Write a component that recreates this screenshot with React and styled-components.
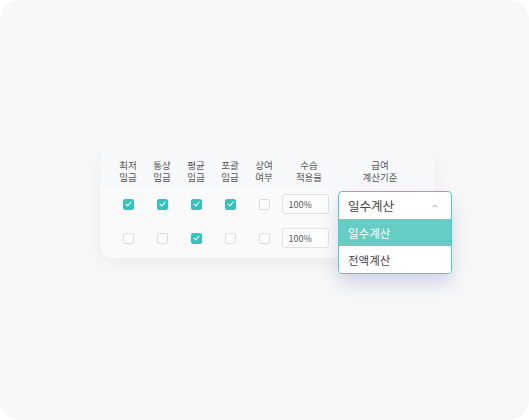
import React from 'react';
import styled, { createGlobalStyle } from 'styled-components';

const GlobalStyle = createGlobalStyle`
    html, body {
        margin: 0;
        padding: 0;
        background: #ffffff;
    }
    body {
        font-family: "Noto Sans CJK KR", "Noto Sans", sans-serif;
    }
`;

const Frame = styled.div`
    width: 529px;
    height: 420px;
    background: #f8f8f8;
    border-radius: 20px;
    box-sizing: border-box;
    padding: 146px 0 0 100px;
`;

const Card = styled.div`
    position: relative;
    width: 335px;
    height: 112px;
    background: #fafafa;
    border-radius: 14px;
    box-shadow: 0 6px 20px rgba(0, 0, 0, 0.05);
`;

const HeaderRow = styled.div`
    display: grid;
    grid-template-columns: 34px 34px 34px 34px 34px 56px 86px;
    padding-left: 11px;
    height: 41px;
    align-items: end;
    background: #f7f8fa;
    border-radius: 14px 14px 0 0;
`;

const HeadCell = styled.div`
    text-align: center;
    font-size: 9.5px;
    line-height: 12px;
    color: #555;
    padding-bottom: 4px;
`;

const Row = styled.div`
    display: grid;
    grid-template-columns: 34px 34px 34px 34px 34px 56px 86px;
    padding-left: 11px;
    height: 34px;
    align-items: center;
`;

const Cell = styled.div`
    display: flex;
    justify-content: center;
    align-items: center;
    position: relative;
    height: 100%;
`;

const Box = styled.div`
    width: 11px;
    height: 11px;
    box-sizing: border-box;
    border-radius: 2px;
    display: flex;
    align-items: center;
    justify-content: center;
    background: ${p => (p.checked ? '#2ec6bf' : '#fcfcfc')};
    border: 1px solid ${p => (p.checked ? '#2ec6bf' : '#dddddd')};
`;

const RateInput = styled.div`
    width: 47px;
    height: 20px;
    box-sizing: border-box;
    border: 1px solid #e1e1e1;
    border-radius: 3px;
    background: #fdfdfd;
    font-size: 9px;
    color: #555;
    display: flex;
    align-items: center;
    padding-left: 6px;
    margin-right: 8px;
`;

const Dropdown = styled.div`
    position: absolute;
    top: 4px;
    left: 1px;
    width: 114px;
    box-sizing: border-box;
    border: 1px solid #40d0c8;
    border-radius: 4px;
    background: #ffffff;
    box-shadow: 0 10px 18px rgba(110, 130, 190, 0.28);
    overflow: hidden;
    z-index: 2;
`;

const Selected = styled.div`
    height: 27px;
    display: flex;
    align-items: center;
    justify-content: space-between;
    padding: 0 13px 0 9px;
    font-size: 12.5px;
    color: #444;
`;

const Option = styled.div`
    height: 27px;
    display: flex;
    align-items: center;
    padding-left: 9px;
    font-size: 11.5px;
    color: ${p => (p.active ? '#ffffff' : '#444')};
    background: ${p => (p.active ? '#66cdc4' : '#ffffff')};
`;

const Check = () => (
    <svg width="7" height="6" viewBox="0 0 7 6">
        <path d="M1 3.2 L2.8 4.8 L6 1.2" fill="none" stroke="#fff" strokeWidth="1.1" strokeLinecap="round" strokeLinejoin="round" />
    </svg>
);

const Chevron = () => (
    <svg width="6" height="4" viewBox="0 0 6 4">
        <path d="M1 3 L3 1 L5 3" fill="none" stroke="#999" strokeWidth="0.9" strokeLinecap="round" />
    </svg>
);

const headers = [
    ['최저', '임금'],
    ['통상', '임금'],
    ['평균', '임금'],
    ['포괄', '임금'],
    ['상여', '여부'],
    ['수습', '적용율'],
    ['급여', '계산기준'],
];

const rows = [
    { checks: [true, true, true, true, false], rate: '100%', open: true },
    { checks: [false, false, true, false, false], rate: '100%', open: false },
];

export default function App() {
    return (
        <>
            <GlobalStyle />
            <Frame>
                <Card>
                    <HeaderRow>
                        {headers.map((h, i) => (
                            <HeadCell key={i}>
                                {h[0]}
                                <br />
                                {h[1]}
                            </HeadCell>
                        ))}
                    </HeaderRow>
                    {rows.map((row, r) => (
                        <Row key={r}>
                            {row.checks.map((c, i) => (
                                <Cell key={i}>
                                    <Box checked={c}>{c && <Check />}</Box>
                                </Cell>
                            ))}
                            <Cell>
                                <RateInput>{row.rate}</RateInput>
                            </Cell>
                            <Cell>
                                {row.open && (
                                    <Dropdown>
                                        <Selected>
                                            일수계산
                                            <Chevron />
                                        </Selected>
                                        <Option active>일수계산</Option>
                                        <Option>전액계산</Option>
                                    </Dropdown>
                                )}
                            </Cell>
                        </Row>
                    ))}
                </Card>
            </Frame>
        </>
    );
}
